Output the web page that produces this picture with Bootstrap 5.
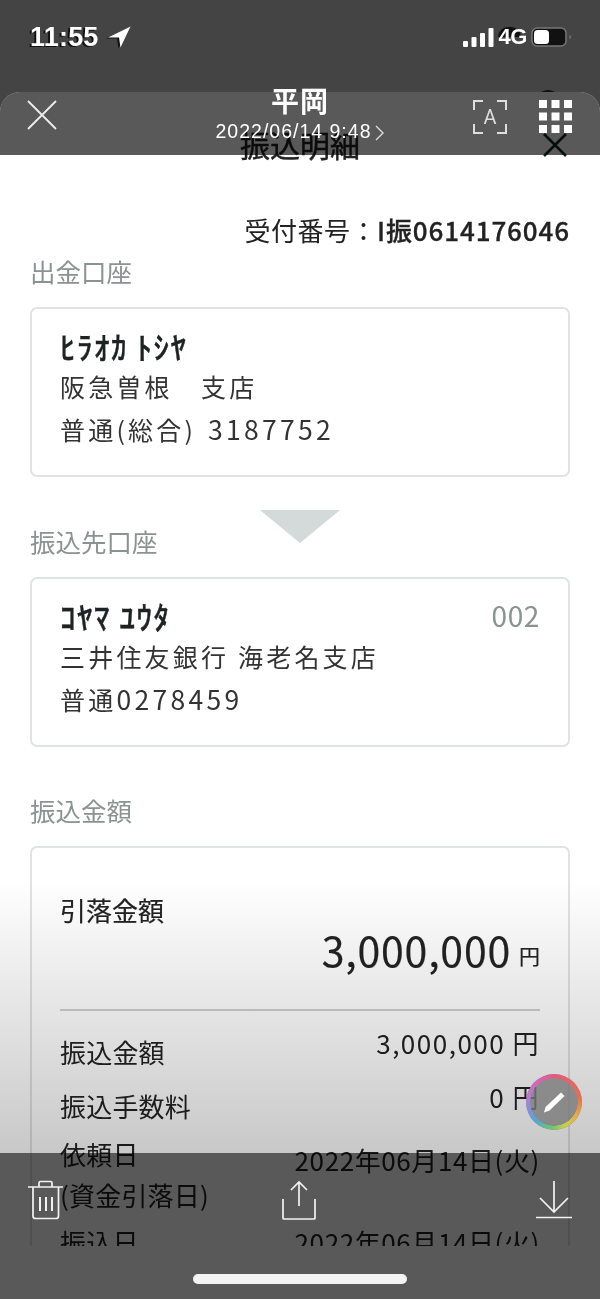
<!DOCTYPE html>
<html lang="ja">
<head>
    <meta charset="UTF-8">
    <meta name="viewport" content="width=device-width, initial-scale=1.0">
    <title>振込明細</title>
    <link href="https://cdn.jsdelivr.net/npm/bootstrap@5.3.0/dist/css/bootstrap.min.css" rel="stylesheet">
    <style>
        html, body { margin: 0; background: #444; }
        body { font-family: "Noto Sans CJK JP", "Noto Sans", sans-serif; color: #222; }
        .screen { position: relative; width: 600px; height: 1299px; overflow: hidden; background: #444; }

        /* the page underneath */
        .sheet { position: absolute; left: 0; right: 0; top: 92px; height: 1207px; background: #fff; border-radius: 20px 20px 0 0; }
        .sheet-body { height: 1154px; overflow: hidden; padding: 0 30px; }
        .sheet-title { height: 74px; padding-top: 32px; font-size: 30px; line-height: 40px; color: #222; position: relative; -webkit-text-stroke: .4px #222; }
        .sheet-close { position: absolute; right: 2px; top: 40px; }
        .receipt { margin-top: 46px; font-size: 26px; line-height: 36px; letter-spacing: .5px; color: #222; }
        .receipt b { font-weight: 500; letter-spacing: .9px; -webkit-text-stroke: .3px #222; }
        .sec-label { font-size: 25.500px; line-height: 36px; color: #8a9391; height: 36px; }
        .sec-first { margin-top: 5px; }
        .sec-amount { margin-top: 45px; }
        .info-box { border: 2px solid #dfe3e3; border-radius: 7px; background: #fff; margin-top: 18px; padding: 17px 28px 0; height: 170px; position: relative; }
        .kana { font-size: 31px; line-height: 39px; font-weight: 500; letter-spacing: 1.500px; height: 39px; color: #1d2222; -webkit-text-stroke: .4px #1d2222; }
        .info-line { font-size: 25px; line-height: 42.500px; letter-spacing: 3.200px; color: #333; }
        .num-wide { font-size: 26.500px; letter-spacing: 3.300px; }
        .num-gap { margin-left: 3px; }
        .bank-code { font-size: 28px; color: #8a9391; line-height: 39px; letter-spacing: .6px; }
        .down-arrow { width: 0; height: 0; border-left: 40px solid transparent; border-right: 40px solid transparent; border-top: 33px solid #d3dad9; margin: 33px auto -20px; }
        .amount-box { height: 500px; padding-top: 44px; margin-top: 18px; }
        .amount-label { font-size: 26px; line-height: 36px; color: #222; -webkit-text-stroke: .2px #222; }
        .amount-main { font-size: 41px; line-height: 50px; letter-spacing: .8px; color: #222; margin-top: -4px; -webkit-text-stroke: .2px #222; }
        .amount-main small { font-size: 21px; margin-left: 8px; letter-spacing: 0; position: relative; top: -3px; }
        .amount-rule { border-top: 2px solid #cfcfcf; margin: 26px 0 0; opacity: 1; }
        .amount-row { font-size: 26px; line-height: 36px; letter-spacing: .2px; color: #222; }
        .row-fee { height: 54px; padding-top: 23px; }
        .row-fee .val { margin-top: -9px; letter-spacing: 1.500px; }
        .row-two { margin-top: 14px; line-height: 41px; }
        .date-val { letter-spacing: .6px; }
        .row-two .date-val { margin-top: 9px; line-height: 36px; }
        .row-last { margin-top: 9px; }
        .fade-layer { position: absolute; left: 0; right: 0; top: 880px; height: 273px; background: linear-gradient(to bottom, #fff, #c8c8c8); mix-blend-mode: multiply; }

        /* viewer chrome on top of the page */
        .under-blob { position: absolute; background: #111; border-radius: 12px 12px 0 0; }
        .status-bar { position: absolute; left: 30px; right: 28px; top: 20px; height: 34px; color: #fff; }
        .clock { font-family: "Liberation Sans", sans-serif; font-size: 27px; line-height: 34px; font-weight: 700; letter-spacing: .2px; text-shadow: -2px 1px 0 #111; }
        .nav-arrow { filter: drop-shadow(-1.5px 1.5px 0 #111); }
        .net { font-family: "Liberation Sans", sans-serif; font-size: 22px; line-height: 34px; font-weight: 700; letter-spacing: -.4px; }
        .top-bar { position: absolute; left: 0; right: 0; top: 92px; height: 63px; background: rgba(0,0,0,.65); border-radius: 20px 20px 0 0; color: #fff; }
        .top-title { position: absolute; left: 0; right: 0; top: -10px; text-align: center; font-size: 28px; line-height: 36px; font-weight: 700; letter-spacing: 1px; }
        .top-date { position: absolute; left: 0; right: 0; top: 27px; text-align: center; font-family: "Liberation Sans", sans-serif; font-size: 19.500px; line-height: 24px; letter-spacing: 1px; }
        .top-icon { position: absolute; }
        .bottom-bar { position: absolute; left: 0; right: 0; top: 1153px; height: 146px; background: rgba(0,0,0,.65); }
        .bottom-icon { position: absolute; }
        .home-line { position: absolute; left: 193px; top: 121px; width: 214px; height: 10px; border-radius: 5px; background: #f4f4f4; }
        .pen-btn { position: absolute; left: 526px; top: 1074px; width: 56px; height: 56px; border-radius: 50%; background: rgba(120,120,120,.8); display: flex; align-items: center; justify-content: center; }
        .pen-btn::before { content: ""; position: absolute; inset: 0; border-radius: 50%; background: conic-gradient(#e8587c, #e8704f 80deg, #e8b04a 125deg, #c8d048 155deg, #6cc86c 185deg, #4da8d8 225deg, #b87adb 280deg, #e060b0 330deg, #e8587c); -webkit-mask: radial-gradient(closest-side, transparent 23.500px, #000 24px); mask: radial-gradient(closest-side, transparent 23.500px, #000 24px); }
    </style>
</head>
<body>
<div class="screen">
    <div class="under-blob" style="left:536px;top:90px;width:24px;height:12px"></div>
    <div class="under-blob" style="left:498px;top:27px;width:23px;height:10px"></div>

    <div class="sheet">
        <div class="sheet-body">
            <div class="sheet-title text-center">振込明細
                <svg class="sheet-close" width="26" height="26" viewBox="0 0 26 26"><path d="M2 2 24 24M24 2 2 24" stroke="#0e2a20" stroke-width="2.6" fill="none"/></svg>
            </div>
            <div class="receipt text-end">受付番号：<b>I振0614176046</b></div>

            <div class="sec-label sec-first">出金口座</div>
            <div class="card info-box">
                <div class="kana">ﾋﾗｵｶ ﾄｼﾔ</div>
                <div class="info-line">阪急曽根　支店</div>
                <div class="info-line">普通(総合) <span class="num-wide num-gap">3187752</span></div>
            </div>
            <div class="down-arrow"></div>

            <div class="sec-label">振込先口座</div>
            <div class="card info-box">
                <div class="d-flex justify-content-between">
                    <div class="kana">ｺﾔﾏ ﾕｳﾀ</div>
                    <div class="bank-code">002</div>
                </div>
                <div class="info-line">三井住友銀行 海老名支店</div>
                <div class="info-line">普通<span class="num-wide">0278459</span></div>
            </div>

            <div class="sec-label sec-amount">振込金額</div>
            <div class="card info-box amount-box">
                <div class="amount-label">引落金額</div>
                <div class="amount-main text-end">3,000,000<small>円</small></div>
                <hr class="amount-rule">
                <div class="d-flex justify-content-between amount-row row-fee"><span>振込金額</span><span class="val">3,000,000 円</span></div>
                <div class="d-flex justify-content-between amount-row row-fee"><span>振込手数料</span><span class="val">0 円</span></div>
                <div class="d-flex justify-content-between amount-row row-two">
                    <span>依頼日<br>(資金引落日)</span><span class="date-val">2022年06月14日(火)</span>
                </div>
                <div class="d-flex justify-content-between amount-row row-last"><span>振込日</span><span class="date-val">2022年06月14日(火)</span></div>
            </div>
        </div>
    </div>
    <div class="fade-layer"></div>

    <div class="status-bar d-flex justify-content-between align-items-center">
        <div class="d-flex align-items-center gap-2">
            <span class="clock">11:55</span>
            <svg class="nav-arrow" width="24" height="22" viewBox="0 0 24 22"><path d="M23.500 .5 1 11.500H12L13.500 21.500z" fill="#fff"/></svg>
        </div>
        <div class="d-flex align-items-center">
            <svg width="31" height="19" viewBox="0 0 31 19"><rect x="0" y="13" width="5" height="6" rx="1" fill="#fff"/><rect x="8.500" y="9" width="5" height="10" rx="1" fill="#fff"/><rect x="17" y="5" width="5" height="14" rx="1" fill="#fff"/><rect x="25.500" y="0" width="5" height="19" rx="1" fill="#fff"/></svg>
            <span class="net ms-1">4G</span>
            <svg class="ms-1" width="41" height="20" viewBox="0 0 41 20"><rect x="1" y="1" width="34" height="18" rx="5" fill="#111" stroke="#777" stroke-width="1.5"/><rect x="3" y="3" width="15" height="14" rx="3.5" fill="#fff"/><path d="M38.500 8c1 .4 1.500 1 1.500 2s-.5 1.600-1.500 2z" fill="#777"/></svg>
        </div>
    </div>

    <div class="top-bar">
        <div class="top-title">平岡</div>
        <div class="top-date">2022/06/14 9:48<svg class="ms-1" width="9" height="16" viewBox="0 0 9 16"><path d="M1 1 8 8 1 15" stroke="#ddd" stroke-width="1.4" fill="none"/></svg></div>
        <svg class="top-icon" style="left:27px;top:8px" width="30" height="30" viewBox="0 0 30 30"><path d="M1 1 29 29M29 1 1 29" stroke="#eee" stroke-width="1.8" fill="none"/></svg>
        <svg class="top-icon" style="left:472px;top:7px" width="36" height="36" viewBox="0 0 36 36"><path d="M2 11V2H11M25 2H34V11M2 25V34H11M25 34H34V25" stroke="#ddd" stroke-width="2" fill="none"/><text x="18" y="24.500" text-anchor="middle" font-size="20" font-family="Roboto, sans-serif" fill="#ddd">A</text></svg>
        <svg class="top-icon" style="left:539px;top:8px" width="33" height="33" viewBox="0 0 33 33"><g fill="#fff"><rect width="8" height="8"/><rect x="12.500" width="8" height="8"/><rect x="25" width="8" height="8"/><rect y="12.500" width="8" height="8"/><rect x="12.500" y="12.500" width="8" height="8"/><rect x="25" y="12.500" width="8" height="8"/><rect y="25" width="8" height="8"/><rect x="12.500" y="25" width="8" height="8"/><rect x="25" y="25" width="8" height="8"/></g></svg>
    </div>

    <div class="pen-btn">
        <svg width="24" height="24" viewBox="0 0 24 24"><path d="M19 2.500 22.500 6 7.500 20.500 2 22.500 3.500 17z" fill="#fff"/></svg>
    </div>

    <div class="bottom-bar">
        <svg class="bottom-icon" style="left:28px;top:27px" width="35" height="40" viewBox="0 0 35 40"><g stroke="#f2f2f2" stroke-width="1.7" fill="none"><path d="M0 7H35"/><path d="M11 7V3Q11 1.500 12.500 1.500H22.500Q24 1.500 24 3V7"/><path d="M5 7V36Q5 38.500 7.500 38.500H28Q30.500 38.500 30.500 36V7"/><path d="M12 17V31M18 17V31M24 17V31" stroke-width="2"/></g></svg>
        <svg class="bottom-icon" style="left:281px;top:27px" width="36" height="41" viewBox="0 0 36 41"><g stroke="#f2f2f2" stroke-width="1.7" fill="none"><path d="M18 26V2M10 10 18 2 26 10"/><path d="M2 19V38Q2 39 3 39H33Q34 39 34 38V19"/></g></svg>
        <svg class="bottom-icon" style="left:535px;top:27px" width="38" height="40" viewBox="0 0 38 40"><g stroke="#f2f2f2" stroke-width="1.7" fill="none"><path d="M19 1V32M5 18 19 32 33 18"/><path d="M1 37.500H37"/></g></svg>
        <div class="home-line"></div>
    </div>
</div>
<script src="https://cdn.jsdelivr.net/npm/bootstrap@5.3.0/dist/js/bootstrap.bundle.min.js"></script>
</body>
</html>
